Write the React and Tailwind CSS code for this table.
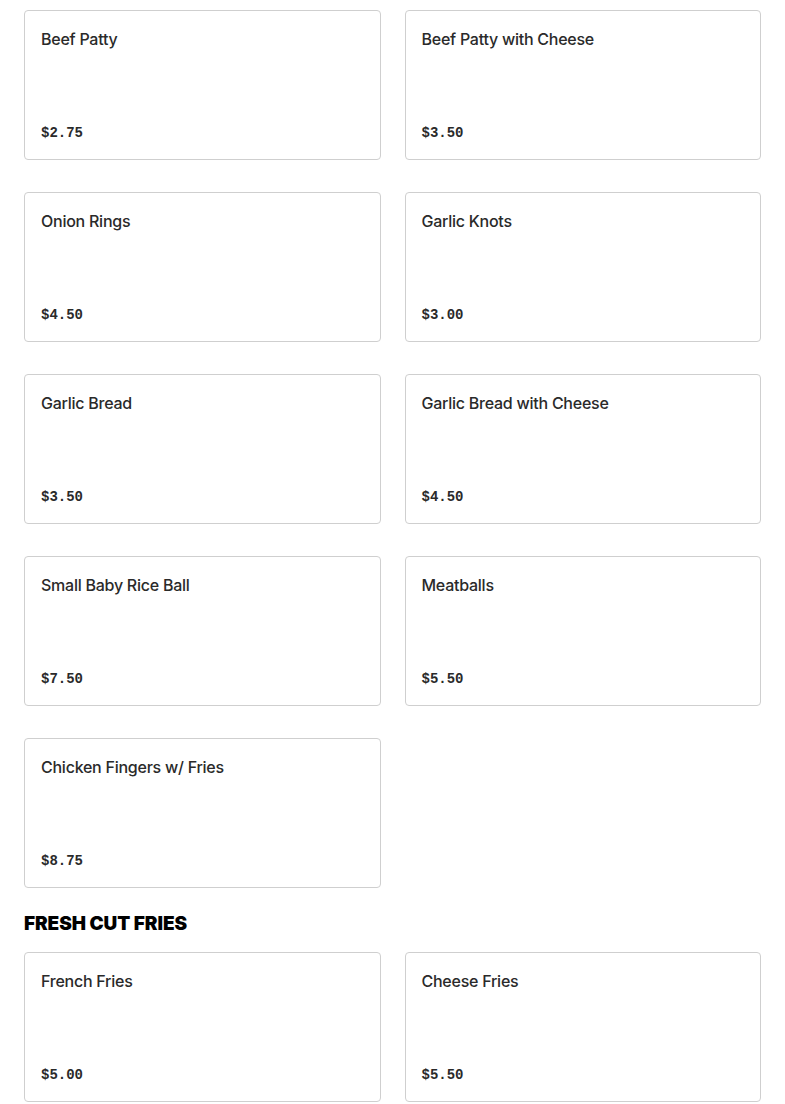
import React from "react";

const SIDES = [
  { name: "Beef Patty", price: "$2.75" },
  { name: "Beef Patty with Cheese", price: "$3.50" },
  { name: "Onion Rings", price: "$4.50" },
  { name: "Garlic Knots", price: "$3.00" },
  { name: "Garlic Bread", price: "$3.50" },
  { name: "Garlic Bread with Cheese", price: "$4.50" },
  { name: "Small Baby Rice Ball", price: "$7.50" },
  { name: "Meatballs", price: "$5.50" },
  { name: "Chicken Fingers w/ Fries", price: "$8.75" },
];

const FRIES = [
  { name: "French Fries", price: "$5.00" },
  { name: "Cheese Fries", price: "$5.50" },
];

function ItemCard({ name, price }) {
  return (
    <div className="h-[150px] border border-[#cfcfcf] rounded-[4px] bg-white px-4 py-4 flex flex-col justify-between">
      <div className="text-[16px] leading-6 font-medium text-[#2a2a2a] font-['Inter',sans-serif] tracking-[-0.25px]">
        {name}
      </div>
      <div className="text-[14px] leading-5 font-bold text-[#2a2a2a] font-['Liberation_Mono',monospace]">
        {price}
      </div>
    </div>
  );
}

export default function App() {
  return (
    <div className="bg-white min-h-screen px-6 pt-[10px]">
      <div className="grid grid-cols-2 gap-x-6 gap-y-8">
        {SIDES.map((it) => (
          <ItemCard key={it.name} {...it} />
        ))}
      </div>
      <h2 className="mt-[24px] mb-[16px] text-[19px] leading-6 font-black uppercase text-black font-['Inter',sans-serif] tracking-[-0.1px]">
        Fresh Cut Fries
      </h2>
      <div className="grid grid-cols-2 gap-x-6 gap-y-8">
        {FRIES.map((it) => (
          <ItemCard key={it.name} {...it} />
        ))}
      </div>
    </div>
  );
}
